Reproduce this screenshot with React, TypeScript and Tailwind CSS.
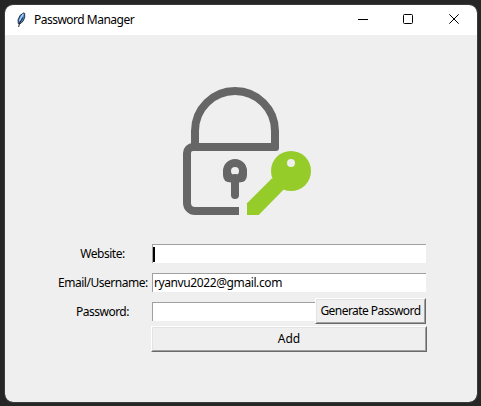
import type { ReactNode } from 'react';

function Feather() {
  return (
    <svg className="h-4 w-4" viewBox="0 0 16 16" fill="none">
      <path d="M4.3 11.5 4 8l2-4.5L9.5 1l1.2.4v4L9 9.3 5.8 12Z" fill="#4c8ad6" stroke="#182333" strokeWidth=".9" />
      <path d="M9.3 2 7.2 5.5 5.6 9" stroke="#b4d6f7" strokeWidth="1.3" />
      <path d="M8.9 5.5 5.6 11l-1 4" stroke="#111" strokeWidth=".9" />
    </svg>
  );
}

function Logo() {
  return (
    <svg className="h-32 w-32" viewBox="183 87 128 128" fill="none">
      <g stroke="#666" strokeWidth="8">
        <path d="M195 147v-16a40 40 0 0 1 80 0v16" />
        <path d="M239 211h-44a8 8 0 0 1-8-8v-50a6 6 0 0 1 6-6h82" strokeLinejoin="round" />
        <path d="M235 178v17" strokeLinecap="round" />
      </g>
      <path d="M271 143h8v5a3 3 0 0 1-3 3h-5Z" fill="#666" />
      <path fillRule="evenodd" fill="#666" d="M235 159a12 12 0 0 1 12 12v4q0 7.5-8 7.5h-8q-8 0-8-7.5v-4a12 12 0 0 1 12-12Zm0 8a4 4 0 1 0 0 8 4 4 0 0 0 0-8Z" />
      <path d="M272 178.3 247 203.3V215h11.7l25-25.5Z" fill="#96cc29" />
      <circle cx="291" cy="171" r="20" fill="#96cc29" />
      <circle cx="291" cy="163" r="4" fill="#efefef" />
    </svg>
  );
}

function Field({ children, className }: { children?: ReactNode; className: string }) {
  return (
    <div className={`flex h-[19px] items-center border-t border-l border-[#a0a0a0] bg-white pl-px ${className}`}>
      {children}
    </div>
  );
}

function Button({ children, className }: { children: ReactNode; className: string }) {
  return (
    <button className={`border border-t-white border-l-white border-r-[#696969] border-b-[#696969] ${className}`}>
      <span className="flex h-full items-center justify-center border border-t-[#e3e3e3] border-l-[#e3e3e3] border-r-[#a0a0a0] border-b-[#a0a0a0] whitespace-nowrap">
        {children}
      </span>
    </button>
  );
}

export default function App() {
  return (
    <div className="h-[406px] w-[481px] bg-[#262626] pt-[5px] pl-[5px] font-['Noto_Sans',sans-serif] text-xs leading-4 text-black">
      <div className="h-[397px] w-[472px] overflow-hidden rounded-lg bg-[#efefef] outline outline-[#3b3b3b]">
        <header className="flex h-[30px] items-center bg-white pl-[9px]">
          <Feather />
          <span className="ml-1 w-[310px] tracking-[-0.51px] whitespace-nowrap">Password Manager</span>
          <svg className="h-[30px] w-[120px]" viewBox="344 5 120 30" fill="none" stroke="#000">
            <path d="M358 19.5h10" />
            <rect x="403.5" y="14.5" width="9" height="9" rx="1" />
            <path d="m449.3 14.3 9.4 9.4m0-9.4-9.4 9.4" />
          </svg>
        </header>
        <main className="pt-[52px]">
          <div className="flex h-[152px] pl-[178px]">
            <Logo />
          </div>
          <div className="grid grid-cols-[89px_276px] grid-rows-[29px_29px_29px_26px] items-center gap-x-[4px] pl-[53px]">
            <span className="text-center tracking-[-0.48px]">Website:</span>
            <Field className="ml-px w-[274px]">
              <span className="-ml-px h-[15px] w-[2px] bg-black" />
            </Field>
            <span className="text-center tracking-[-0.48px] whitespace-nowrap">Email/Username:</span>
            <Field className="ml-px w-[274px]">
              <span className="tracking-[-0.4px]">ryanvu2022@gmail.com</span>
            </Field>
            <span className="text-center tracking-[-0.52px]">Password:</span>
            <div className="flex items-center pl-px">
              <Field className="w-[163px]" />
              <Button className="-mt-0.5 h-[26px] w-[111px] tracking-[-0.56px]">Generate Password</Button>
            </div>
            <Button className="col-start-2 h-[26px] w-[276px]">Add</Button>
          </div>
        </main>
      </div>
    </div>
  );
}
